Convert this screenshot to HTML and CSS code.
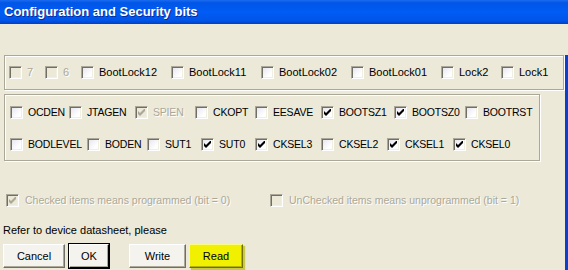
FILE: index.html
```html
<!DOCTYPE html>
<html lang="en">
<head>
    <meta charset="UTF-8">
    <title>Configuration and Security bits</title>
    <link rel="stylesheet" href="styles.css">
</head>
<body>

<div class="window">
    <div class="titlebar">Configuration and Security bits</div>
    <div class="content">

        <div class="group lockbits">
            <div class="row row-lock">
                <label class="item disabled"><span class="cb"></span>7</label>
                <label class="item disabled"><span class="cb"></span>6</label>
                <label class="item"><span class="cb"></span>BootLock12</label>
                <label class="item"><span class="cb"></span>BootLock11</label>
                <label class="item"><span class="cb"></span>BootLock02</label>
                <label class="item"><span class="cb"></span>BootLock01</label>
                <label class="item"><span class="cb"></span>Lock2</label>
                <label class="item"><span class="cb"></span>Lock1</label>
            </div>
        </div>

        <div class="group fusebits">
            <div class="row row-fuse-high">
                <label class="item fuse"><span class="cb"></span>OCDEN</label>
                <label class="item fuse"><span class="cb"></span>JTAGEN</label>
                <label class="item fuse disabled"><span class="cb checked"><svg viewBox="0 0 7 7"><polygon points="0,2 2,4 7,-1 7,2 2,7 0,5"/></svg></span>SPIEN</label>
                <label class="item fuse"><span class="cb"></span>CKOPT</label>
                <label class="item fuse"><span class="cb"></span>EESAVE</label>
                <label class="item fuse"><span class="cb checked"><svg viewBox="0 0 7 7"><polygon points="0,2 2,4 7,-1 7,2 2,7 0,5"/></svg></span>BOOTSZ1</label>
                <label class="item fuse"><span class="cb checked"><svg viewBox="0 0 7 7"><polygon points="0,2 2,4 7,-1 7,2 2,7 0,5"/></svg></span>BOOTSZ0</label>
                <label class="item fuse"><span class="cb"></span>BOOTRST</label>
            </div>
            <div class="row row-fuse-low">
                <label class="item fuse"><span class="cb"></span>BODLEVEL</label>
                <label class="item fuse"><span class="cb"></span>BODEN</label>
                <label class="item fuse"><span class="cb"></span>SUT1</label>
                <label class="item fuse"><span class="cb checked"><svg viewBox="0 0 7 7"><polygon points="0,2 2,4 7,-1 7,2 2,7 0,5"/></svg></span>SUT0</label>
                <label class="item fuse"><span class="cb checked"><svg viewBox="0 0 7 7"><polygon points="0,2 2,4 7,-1 7,2 2,7 0,5"/></svg></span>CKSEL3</label>
                <label class="item fuse"><span class="cb"></span>CKSEL2</label>
                <label class="item fuse"><span class="cb checked"><svg viewBox="0 0 7 7"><polygon points="0,2 2,4 7,-1 7,2 2,7 0,5"/></svg></span>CKSEL1</label>
                <label class="item fuse"><span class="cb checked"><svg viewBox="0 0 7 7"><polygon points="0,2 2,4 7,-1 7,2 2,7 0,5"/></svg></span>CKSEL0</label>
            </div>
        </div>

        <div class="legend">
            <label class="item disabled"><span class="cb checked"><svg viewBox="0 0 7 7"><polygon points="0,2 2,4 7,-1 7,2 2,7 0,5"/></svg></span>Checked items means programmed (bit = 0)</label>
            <label class="item disabled"><span class="cb"></span>UnChecked items means unprogrammed (bit = 1)</label>
        </div>

        <p class="note">Refer to device datasheet, please</p>

        <div class="buttons">
            <button class="btn btn-cancel">Cancel</button>
            <button class="btn btn-ok">OK</button>
            <button class="btn btn-write">Write</button>
            <button class="btn btn-read">Read</button>
        </div>

    </div>
</div>

</body>
</html>
```

FILE: styles.css
```css
body {
    margin: 0;
    background-color: #ece9d8;
    font-family: 'Liberation Sans', Arial, sans-serif;
    font-size: 11px;
    color: #000;
}
.window {
    width: 568px;
    height: 270px;
    overflow: hidden;
    background-color: #ece9d8;
}
.titlebar {
    height: 24px;
    line-height: 24px;
    padding-left: 4px;
    color: white;
    font-weight: bold;
    font-size: 13px;
    text-shadow: 1px 1px 0 #0a2a9a;
    background: linear-gradient(#1b6af0 0%, #0056e6 12%, #005cf6 50%, #0055e8 85%, #003fc6 100%);
}
.content {
    height: 246px;
    border-right: 3px solid #0a40d2;
    box-sizing: border-box;
}
.group {
    border: 1px solid #aca899;
    box-shadow: inset 1px 1px 0 #fff, 1px 1px 0 #fff;
    margin-left: 4px;
    box-sizing: border-box;
}
.lockbits {
    margin-top: 31px;
    width: 560px;
    height: 35px;
    padding: 10px 0 0 4px;
}
.fusebits {
    margin-top: 4px;
    width: 536px;
    height: 67px;
    padding: 11px 0 0 5px;
}
.row {
    display: grid;
    height: 13px;
}
.row-lock {
    grid-template-columns: 36px 36px 90px 90px 90px 90px 60px auto;
}
.row-fuse-high {
    grid-template-columns: 59px 66px 60px 60px 66px 73px 71px auto;
}
.row-fuse-low {
    margin-top: 19px;
    grid-template-columns: 77px 60px 54px 54px 66px 66px 66px auto;
}
.item {
    display: flex;
    align-items: center;
    gap: 5px;
    height: 13px;
    line-height: 13px;
    white-space: nowrap;
}
.item.fuse {
    font-size: 10.5px;
    letter-spacing: -0.2px;
}
.cb {
    width: 13px;
    height: 13px;
    flex: none;
    box-sizing: border-box;
    border-top: 1px solid #aca899;
    border-left: 1px solid #aca899;
    border-right: 1px solid #fff;
    border-bottom: 1px solid #fff;
    box-shadow: inset 1px 1px 0 #716f64, inset -1px -1px 0 #f1efe2;
    background: linear-gradient(135deg, #e4e3f0, #fff 70%);
    display: flex;
    align-items: center;
    justify-content: center;
}
.cb svg {
    width: 7px;
    height: 7px;
    fill: #000;
}
.disabled {
    color: #aca899;
    text-shadow: 1px 1px 0 #fff;
}
.disabled .cb {
    background: #ece9d8;
}
.disabled .cb svg {
    fill: #aca899;
}
.legend {
    display: grid;
    grid-template-columns: 264px auto;
    margin-top: 33px;
    padding-left: 6px;
}
.legend .item {
    gap: 6px;
    font-size: 10.5px;
}
.note {
    margin: 17px 0 0 3px;
    line-height: 13px;
}
.buttons {
    display: flex;
    margin: 7px 0 0 3px;
}
.btn {
    height: 24px;
    font-family: 'Liberation Sans', Arial, sans-serif;
    font-size: 11px;
    color: #000;
    background-color: #f4f3ee;
    border: 1px solid;
    border-color: #fff #716f64 #716f64 #fff;
    box-shadow: inset -1px -1px 0 #aca899;
    padding: 0;
}
.btn-cancel {
    width: 62px;
}
.btn-ok {
    width: 40px;
    margin-left: 4px;
    outline: 1px solid #000;
    border-color: #fff #000 #000 #fff;
}
.btn-write {
    width: 57px;
    margin-left: 20px;
}
.btn-read {
    width: 54px;
    margin-left: 3px;
    background-color: #f0f000;
    border-color: #fafa80 #6e6e00 #6e6e00 #fafa80;
    box-shadow: inset -1px -1px 0 #b4b400, 2px 2px 1px #c8c84a;
}
```
